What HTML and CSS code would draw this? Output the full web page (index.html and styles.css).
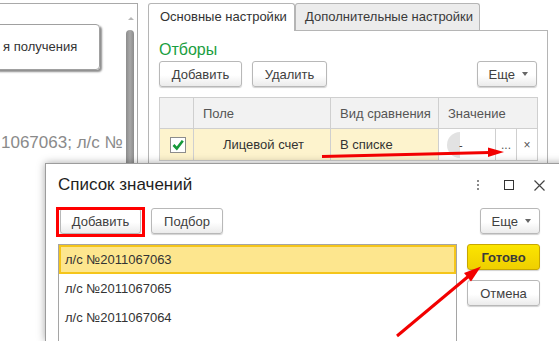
FILE: index.html
```html
<!DOCTYPE html>
<html lang="ru">
<head>
  <meta charset="UTF-8" />
  <meta name="viewport" content="width=device-width, initial-scale=1.0"/>
  <title>Список значений</title>
  <link rel="stylesheet" href="styles.css">
</head>
<body>
  <div class="screen">
    <div class="left">
      <div class="left-main">
        <div class="recv-btn">я получения</div>
        <div class="faded">1067063; л/с №</div>
      </div>
      <div class="scrollbar">
        <span class="scroll-up"></span>
        <span class="thumb"></span>
      </div>
    </div>

    <div class="right">
      <div class="tabs">
        <div class="tab active">Основные настройки</div>
        <div class="tab">Дополнительные настройки</div>
      </div>
      <div class="panel">
        <div class="group-title">Отборы</div>
        <div class="toolbar">
          <button class="btn w-add">Добавить</button>
          <button class="btn w-del">Удалить</button>
          <button class="btn more">Еще <span class="caret"></span></button>
        </div>
        <table class="filters">
          <colgroup>
            <col style="width:34px"><col style="width:137px"><col style="width:108px">
            <col style="width:57px"><col style="width:21px"><col style="width:21px">
          </colgroup>
          <tr>
            <th></th>
            <th>Поле</th>
            <th>Вид сравнения</th>
            <th colspan="3">Значение</th>
          </tr>
          <tr>
            <td class="yel check-cell">
              <span class="checkbox">
                <svg width="14" height="14" viewBox="0 0 14 14"><polyline points="2.5,7 5.8,10.5 11.8,2.8" fill="none" stroke="#16993a" stroke-width="2.6"/></svg>
              </span>
            </td>
            <td class="yel field">Лицевой счет</td>
            <td class="yel">В списке</td>
            <td class="value"><span class="spinner"></span><span class="dash">-</span></td>
            <td class="mini">...</td>
            <td class="mini">×</td>
          </tr>
        </table>
      </div>
    </div>
  </div>

  <div class="dialog">
    <div class="dlg-head">
      <div class="dlg-title">Список значений</div>
      <span class="dots"><i></i><i></i><i></i></span>
      <span class="max"></span>
      <svg class="close" width="11" height="11" viewBox="0 0 11 11"><path d="M0.5 0.5 L10.5 10.5 M10.5 0.5 L0.5 10.5" stroke="#444" stroke-width="1.2"/></svg>
    </div>
    <div class="dlg-toolbar">
      <button class="btn d-add marked">Добавить</button>
      <button class="btn d-pick">Подбор</button>
      <button class="btn more">Еще <span class="caret"></span></button>
    </div>
    <div class="dlg-body">
      <div class="list">
        <div class="item selected">л/с №2011067063</div>
        <div class="item">л/с №2011067065</div>
        <div class="item">л/с №2011067064</div>
      </div>
      <div class="side">
        <button class="btn ok">Готово</button>
        <button class="btn">Отмена</button>
      </div>
    </div>
  </div>

  <svg class="arrows" width="559" height="341" viewBox="0 0 559 341">
    <line x1="322" y1="156.5" x2="490" y2="152.5" stroke="#f20000" stroke-width="3"/>
    <polygon points="504,152 488,147.5 488,157" fill="#f20000"/>
    <line x1="397" y1="336" x2="470" y2="275" stroke="#f20000" stroke-width="3"/>
    <polygon points="481,266.5 471,281.5 464,273" fill="#f20000"/>
  </svg>
</body>
</html>
```

FILE: styles.css
```css
body {
  margin: 0;
  width: 559px;
  height: 341px;
  overflow: hidden;
  position: relative;
  background: #fff;
  font-family: "Liberation Sans", Arial, sans-serif;
  font-size: 13px;
  color: #333;
}
.screen {
  display: flex;
  height: 341px;
  padding-top: 3px;
  box-sizing: border-box;
  overflow: hidden;
}

/* left form behind */
.left {
  display: flex;
  width: 138px;
  box-sizing: border-box;
  border-top: 1px solid #a9a9a9;
  border-right: 1px solid #a9a9a9;
}
.left-main {
  width: 124px;
  overflow: hidden;
}
.recv-btn {
  width: 106px;
  height: 46px;
  margin: 20px 0 0 -6px;
  box-sizing: border-box;
  border: 1px solid #a0a0a0;
  border-radius: 4px;
  box-shadow: 2px 2px 2px rgba(0,0,0,0.45);
  padding-left: 8px;
  line-height: 44px;
  color: #333;
}
.faded {
  margin: 63px 0 0 1px;
  font-size: 17px;
  line-height: 20px;
  color: #8a8a8a;
  white-space: nowrap;
}
.scrollbar {
  width: 13px;
}
.scroll-up {
  display: block;
  width: 0;
  height: 0;
  margin: 13px 0 0 4px;
  border-left: 3px solid transparent;
  border-right: 3px solid transparent;
  border-bottom: 3px solid #b8b8b8;
}
.thumb {
  display: block;
  width: 8px;
  height: 300px;
  margin: 10px 0 0 2px;
  border-radius: 4px 4px 0 0;
  background: linear-gradient(90deg, #8c8c8c, #a8a8a8 50%, #8c8c8c);
}

/* settings panel */
.right {
  margin-left: 10px;
  width: 400px;
}
.tabs {
  display: flex;
  height: 27px;
  position: relative;
  z-index: 1;
}
.tab {
  height: 27px;
  box-sizing: border-box;
  border: 1px solid #b5b5b5;
  border-bottom: none;
  border-radius: 3px 3px 0 0;
  line-height: 26px;
  padding-left: 9px;
  background: #ececec;
  width: 185px;
  color: #3a3a3a;
}
.tab.active {
  width: 147px;
  height: 28px;
  padding-left: 11px;
  background: #fff;
  color: #333;
}
.panel {
  height: 290px;
  border: 1px solid #b5b5b5;
  padding: 0 10px;
}
.group-title {
  margin-top: 9px;
  font-size: 16px;
  line-height: 20px;
  color: #1a9e41;
}
.toolbar {
  display: flex;
  gap: 10px;
  margin-top: 1px;
}
.btn {
  height: 26px;
  box-sizing: border-box;
  border: 1px solid #b8b8b8;
  border-radius: 3px;
  background: linear-gradient(#ffffff 55%, #ebebeb);
  box-shadow: 0 1px 1px rgba(0,0,0,0.18);
  font-family: "Liberation Sans", Arial, sans-serif;
  font-size: 13px;
  color: #404040;
  padding: 0;
}
.w-add { width: 83px; }
.w-del { width: 75px; }
.more {
  width: 60px;
  margin-left: auto;
  display: flex;
  align-items: center;
  justify-content: flex-end;
  gap: 7px;
  padding-right: 8px;
}
.caret {
  width: 0;
  height: 0;
  border-left: 3px solid transparent;
  border-right: 3px solid transparent;
  border-top: 4px solid #666;
}
.filters {
  margin-top: 10px;
  width: 378px;
  table-layout: fixed;
  border-collapse: collapse;
}
.filters th,
.filters td {
  border: 1px solid #cfcfcf;
  padding: 0 0 0 9px;
  text-align: left;
  white-space: nowrap;
}
.filters th {
  height: 30px;
  background: #f2f2f2;
  font-weight: normal;
  color: #555;
}
.filters td {
  height: 31px;
  color: #333;
}
.filters td.yel { background: #fdf3cd; }
.filters td.field { padding-left: 29px; }
.check-cell { padding-left: 10px !important; }
.checkbox {
  display: block;
  width: 14px;
  height: 14px;
  border: 1px solid #8c8c8c;
  background: #fff;
}
.checkbox svg { display: block; }
.value { padding-left: 8px !important; }
.spinner {
  display: inline-block;
  vertical-align: middle;
  width: 13px;
  height: 26px;
  border-radius: 13px 0 0 13px;
  background: #e2e2e2;
}
.dash {
  vertical-align: middle;
  margin-left: -1px;
  font-size: 11px;
}
.filters td.mini {
  padding: 0;
  text-align: center;
  font-size: 12px;
  color: #555;
}

/* dialog */
.dialog {
  position: absolute;
  left: 45px;
  top: 163px;
  width: 534px;
  height: 178px;
  box-sizing: border-box;
  border: 1px solid #9c9c9c;
  border-bottom: none;
  box-shadow: 0 0 8px rgba(0,0,0,0.35);
  background: #fff;
  padding: 10px 38px 0 12px;
  z-index: 2;
  overflow: hidden;
}
.dlg-head {
  display: flex;
  align-items: center;
  height: 22px;
  margin-right: -5px;
}
.dlg-title {
  flex: 1;
  font-size: 17px;
  color: #1e1e1e;
}
.dots {
  display: flex;
  flex-direction: column;
  gap: 2px;
}
.dots i {
  width: 2px;
  height: 2px;
  background: #8a8a8a;
}
.max {
  width: 10px;
  height: 10px;
  box-sizing: border-box;
  border: 1.5px solid #333;
  margin-left: 25px;
}
.close { margin-left: 20px; }
.dlg-toolbar {
  display: flex;
  margin-top: 12px;
}
.d-add {
  width: 81px;
  margin-left: 2px;
  position: relative;
}
.marked::after {
  content: "";
  position: absolute;
  left: -5px;
  right: -5px;
  top: -2px;
  bottom: -4px;
  border: 3px solid #f00;
}
.d-pick {
  width: 72px;
  margin-left: 10px;
}
.dlg-body {
  display: flex;
  gap: 10px;
  margin-top: 10px;
}
.list {
  width: 399px;
  height: 97px;
  box-sizing: border-box;
  border: 1px solid #a5a5a5;
  border-bottom: none;
}
.item {
  height: 29px;
  box-sizing: border-box;
  border: 2px solid transparent;
  padding-left: 4px;
  line-height: 25px;
  color: #333;
}
.item.selected {
  background: #fde68e;
  border-color: #f5c51a;
}
.side {
  width: 73px;
  display: flex;
  flex-direction: column;
  gap: 10px;
}
.side .btn { width: 73px; }
.btn.ok {
  background: linear-gradient(#fbe500, #efcf00);
  border-color: #c8a700;
  font-weight: bold;
  color: #3a3a3a;
}

.arrows {
  position: absolute;
  left: 0;
  top: 0;
  z-index: 5;
}
```
